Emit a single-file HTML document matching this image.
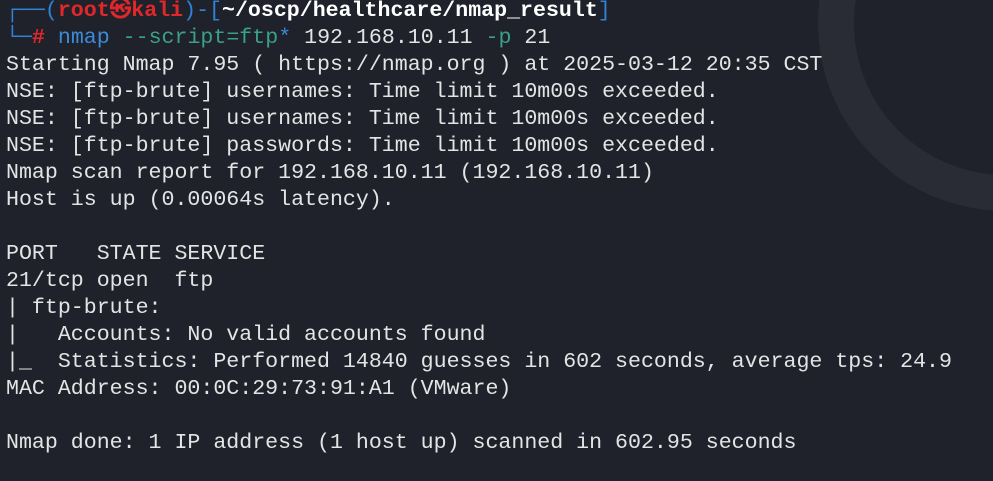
<!DOCTYPE html>
<html><head><meta charset="utf-8"><style>
html,body{margin:0;padding:0;width:993px;height:481px;overflow:hidden;background:#1f222b;}
.ring{position:absolute;left:818px;top:-165px;width:376px;height:376px;border-radius:50%;box-sizing:border-box;border:36px solid #292c35;}
pre{position:absolute;left:6px;top:-2px;margin:0;font-family:"Liberation Mono","DejaVu Sans Mono",monospace;font-size:21.6px;line-height:27px;color:#e4e4e4;}
.b{color:#2f82d6}.r{color:#e0282b;font-weight:bold}.w{color:#fff;font-weight:bold}.g{color:#3aa08a}.bl{color:#3c8ad8}
</style></head><body>
<div class="ring"></div>
<pre><span class="b">┌──(</span><span class="r">root㉿kali</span><span class="b">)-[</span><span class="w">~/oscp/healthcare/nmap_result</span><span class="b">]</span>
<span class="b">└─</span><span class="r">#</span> <span class="bl">nmap</span> <span class="g">--script=ftp</span><span class="bl">*</span> 192.168.10.11 <span class="g">-p</span> 21
Starting Nmap 7.95 ( https://nmap.org ) at 2025-03-12 20:35 CST
NSE: [ftp-brute] usernames: Time limit 10m00s exceeded.
NSE: [ftp-brute] usernames: Time limit 10m00s exceeded.
NSE: [ftp-brute] passwords: Time limit 10m00s exceeded.
Nmap scan report for 192.168.10.11 (192.168.10.11)
Host is up (0.00064s latency).

PORT   STATE SERVICE
21/tcp open  ftp
| ftp-brute: 
|   Accounts: No valid accounts found
|_  Statistics: Performed 14840 guesses in 602 seconds, average tps: 24.9
MAC Address: 00:0C:29:73:91:A1 (VMware)

Nmap done: 1 IP address (1 host up) scanned in 602.95 seconds</pre>
</body></html>
